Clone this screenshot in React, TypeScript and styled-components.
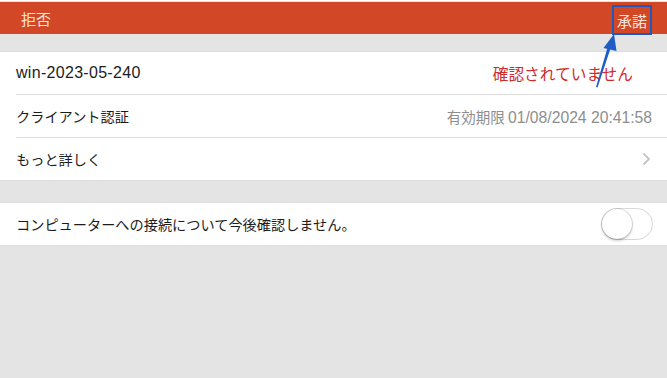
import React from "react";
import styled, { createGlobalStyle } from "styled-components";

const GlobalStyle = createGlobalStyle`
  html, body {
    margin: 0;
    padding: 0;
    background: #e4e4e4;
  }
  body {
    font-family: "Noto Sans CJK JP", "Noto Sans", sans-serif;
    -webkit-font-smoothing: antialiased;
  }
`;

const Screen = styled.div`
  position: relative;
  width: 667px;
  height: 378px;
  overflow: hidden;
  background: #e4e4e4;
  padding-top: 1px;
  box-sizing: border-box;
  border-top: 1px solid #ffffff;
`;

const TopBar = styled.header`
  height: 32px;
  background: #d24726;
  display: flex;
  align-items: flex-end;
  justify-content: space-between;
  padding: 0 15px 0 18px;
  color: #fbe5dc;
  font-size: 15px;
`;

const BarButton = styled.span<{ $highlight?: boolean }>`
  display: inline-flex;
  align-items: center;
  height: ${(p) => (p.$highlight ? "30px" : "28px")};
  padding: 0 3px;
  box-sizing: border-box;
  border: ${(p) => (p.$highlight ? "2px solid #2157b8" : "none")};
  margin-bottom: ${(p) => (p.$highlight ? "-1px" : "2px")};
`;

const Section = styled.section<{ $gap: number }>`
  margin-top: ${(p) => p.$gap}px;
  background: #ffffff;
  border-top: 1px solid #dedede;
  border-bottom: 1px solid #dedede;
`;

const Row = styled.div<{ $last?: boolean }>`
  height: 42px;
  margin-left: 16px;
  padding-right: 15px;
  display: flex;
  align-items: center;
  justify-content: space-between;
  border-bottom: ${(p) => (p.$last ? "none" : "1px solid #dcdcdc")};
  font-size: 14.2px;
  color: #1c1c1c;
`;

const Latin = styled.span<{ $size: number }>`
  font-family: "Liberation Sans", "Noto Sans CJK JP", sans-serif;
  font-size: ${(p) => p.$size}px;
`;

const Detail = styled.span<{ $tone: "red" | "gray" }>`
  color: ${(p) => (p.$tone === "red" ? "#cf2a2a" : "#8e8e8e")};
  font-size: ${(p) => (p.$tone === "red" ? "15.7px" : "14.5px")};
  margin-right: ${(p) => (p.$tone === "red" ? "19px" : "0")};
`;

const Chevron = styled.svg`
  width: 9px;
  height: 14px;
  margin-right: 1px;
`;

const Toggle = styled.div`
  width: 50px;
  height: 30px;
  border-radius: 16px;
  border: 1px solid #d9d9d9;
  background: #ffffff;
  position: relative;
  margin-right: -1px;
`;

const Knob = styled.div`
  position: absolute;
  top: 0;
  left: 0;
  width: 30px;
  height: 30px;
  border-radius: 50%;
  background: #ffffff;
  box-shadow: 0 2px 3px rgba(0, 0, 0, 0.2), 0 0 0 1px rgba(0, 0, 0, 0.12);
`;

const Pointer = styled.svg`
  position: absolute;
  left: 590px;
  top: 30px;
  width: 34px;
  height: 60px;
`;

export default function App() {
  return (
    <>
      <GlobalStyle />
      <Screen>
        <TopBar>
          <BarButton>拒否</BarButton>
          <BarButton $highlight>承諾</BarButton>
        </TopBar>
        <Section $gap={17}>
          <Row>
            <Latin $size={16} style={{ letterSpacing: "0.3px" }}>win-2023-05-240</Latin>
            <Detail $tone="red">確認されていません</Detail>
          </Row>
          <Row>
            <span>クライアント認証</span>
            <Detail $tone="gray">
              有効期限 <Latin $size={15.7}>01/08/2024 20:41:58</Latin>
            </Detail>
          </Row>
          <Row $last>
            <span>もっと詳しく</span>
            <Chevron viewBox="0 0 9 14">
              <path d="M1.5 1.5 L7 7 L1.5 12.5" fill="none" stroke="#c4c4c7" strokeWidth="1.8" />
            </Chevron>
          </Row>
        </Section>
        <Section $gap={21}>
          <Row $last>
            <span>コンピューターへの接続について今後確認しません。</span>
            <Toggle>
              <Knob />
            </Toggle>
          </Row>
        </Section>
        <Pointer viewBox="0 0 34 60">
          <path d="M6 56 L7.5 56.5 L21 16 L18 15 Z" fill="#1f5cc8" />
          <path d="M24 3 L13.5 17 L26.5 20 Z" fill="#1f5cc8" />
        </Pointer>
      </Screen>
    </>
  );
}
